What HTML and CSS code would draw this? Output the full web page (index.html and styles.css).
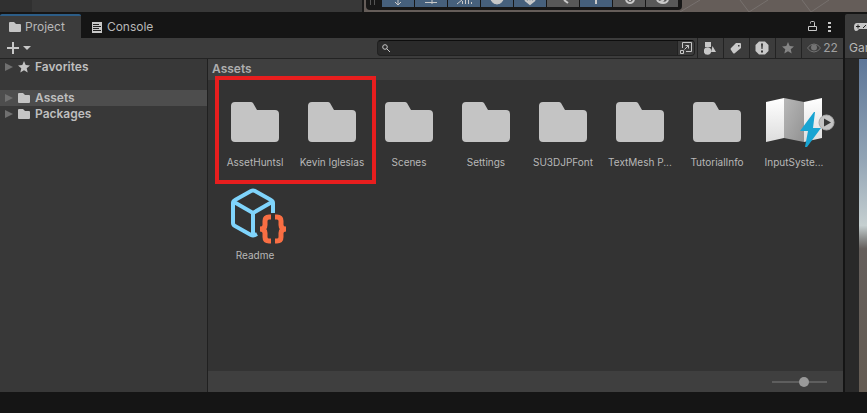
FILE: index.html
```html
<!DOCTYPE html>
<html lang="en">
<head>
<meta charset="utf-8">
<title>Project</title>
<link rel="stylesheet" href="styles.css">
</head>
<body>
<svg class="defs" aria-hidden="true">
  <symbol id="folder" viewBox="0 0 64 64"><path d="M12 12h16q1 0 2 1l4 7h18q4 0 4 4v24q0 4-4 4H12q-4 0-4-4V16q0-4 4-4z"/></symbol>
  <symbol id="folder-small" viewBox="0 0 12 10"><path d="M1 0h4l2 2h4q1 0 1 1v6q0 1-1 1H1q-1 0-1-1V1q0-1 1-1z"/></symbol>
  <symbol id="star" viewBox="0 0 12 12"><path d="M6 0l1.700 4 4.300.4-3.300 2.800 1 4.300L6 9.200l-3.700 2.300 1-4.300L0 4.400 4.300 4z"/></symbol>
  <symbol id="arrow" viewBox="0 0 8 8"><path d="M0 0l8 4-8 4z"/></symbol>
</svg>

<div class="scene">
  <div class="scene-side"></div>
  <div class="scene-main"></div>
  <div class="scene-view">
    <svg class="scene-lines" viewBox="0 0 503 12" preserveAspectRatio="none"><path d="M316 12l20-12M376 0l9 12 19-12M438 0l9 12 18-12"/></svg>
    <div class="tools">
      <span class="grip"></span>
      <button class="tool on" aria-label="Pivot"><svg viewBox="0 0 32 7"><path d="M16 0v4M13 2l3 3 3-3"/></svg></button>
      <button class="tool on" aria-label="Rotation"><svg viewBox="0 0 32 7"><path d="M10 2.500h12M17 0v4"/></svg></button>
      <button class="tool on" aria-label="Grid"><svg viewBox="0 0 32 7"><path d="M9 4l5-4M14.500 1v3M17.500 0v4M20.500 0v4M23.500 2v2"/></svg></button>
      <button class="tool on" aria-label="Shading"><svg viewBox="0 0 32 7"><path class="solid" d="M10 0h12q-2 4-6 4t-6-4z"/></svg></button>
      <button class="tool on" aria-label="Gizmo"><svg viewBox="0 0 32 7"><path class="thick" d="M11 0l5 4 5-4M14 0l2 2 2-2"/></svg></button>
      <button class="tool" aria-label="Picking"><svg viewBox="0 0 32 7"><path class="thick" d="M17 0l4 3"/></svg></button>
      <button class="tool on" aria-label="Light"><svg viewBox="0 0 32 7"><path class="thick" d="M16 0v4"/></svg></button>
      <button class="tool" aria-label="Audio"><svg viewBox="0 0 32 7"><path class="thick" d="M13 0q1 3 4 3t4-3M17 0v1"/></svg></button>
      <button class="tool" aria-label="Effects"><svg viewBox="0 0 32 7"><path class="thick" d="M11 0q2 3 6 3t5-3M14 2l4-2"/></svg></button>
    </div>
  </div>
</div>

<div class="workspace">
  <main class="project">
    <div class="tabs">
      <button class="tab active"><svg class="tab-icon" viewBox="0 0 12 10"><use href="#folder-small"/></svg>Project</button>
      <button class="tab"><svg class="tab-icon console" viewBox="0 0 10 11"><path class="fill" d="M0 0h10v11H0z"/><path class="ink" d="M1 2.500h6M1 4.500h8M1 6.500h6M1 8.500h8"/></svg>Console</button>
      <div class="tab-actions">
        <button class="bare" aria-label="Lock"><svg width="9" height="11" viewBox="0 0 9 11"><path class="line" d="M.5 5.500h8v4h-8zM2.500 2.500V1.500q0-1 1-1h2q1 0 1 1v4"/></svg></button>
        <button class="bare" aria-label="Menu"><svg width="3" height="11" viewBox="0 0 3 11"><path class="fill" d="M0 1h3v2H0zM0 5h3v2H0zM0 9h3v2H0z"/></svg></button>
      </div>
    </div>

    <div class="toolbar">
      <button class="add" aria-label="Create"><svg width="24" height="12" viewBox="0 0 24 12"><path class="fill" d="M5 0h2v5h5v2H7v5H5V7H0V5h5zM16 4h8l-4 4z"/></svg></button>
      <div class="search">
        <svg width="8" height="8" viewBox="0 0 8 8"><circle class="line" cx="3" cy="3" r="2.300"/><path class="line" d="M4.700 4.700L8 8"/></svg>
        <input type="text" aria-label="Search assets">
        <button class="open" aria-label="Open in search"><svg width="12" height="12" viewBox="0 0 12 12"><path class="line" d="M2.500 6V.5h9v9H6M.5 8.500h3v3h-3zM4.500 7.500l4-4M5.500 3.500h3v3"/></svg></button>
      </div>
      <button class="filter" aria-label="Filter by type"><svg width="12" height="13" viewBox="0 0 12 13"><path class="fill" d="M1 0h6v5H1zM8.500 4l3.500 6H7z"/><circle class="fill" cx="3.500" cy="9" r="3.700"/></svg></button>
      <button class="filter" aria-label="Filter by label"><svg width="12" height="12" viewBox="0 0 12 12"><path class="fill" fill-rule="evenodd" d="M6 1h4q1 0 1 1v4l-6 5q-1 1-2 0L1 8q-1-1 0-2zM8 3v1.500h1.500V3z"/></svg></button>
      <button class="filter" aria-label="Filter by warning"><svg width="14" height="14" viewBox="0 0 14 14"><path class="fill" d="M4 .5h6L13.500 4v6L10 13.500H4L.5 10V4z"/><path class="mark" d="M6 2.500h2L7.500 8h-1zM6 9.500h2v2H6z"/></svg></button>
      <button class="filter dim" aria-label="Favorite search"><svg width="12" height="12" viewBox="0 0 12 12"><use href="#star"/></svg></button>
      <button class="filter hidden-count"><svg width="14" height="10" viewBox="0 0 14 10"><path class="eye" d="M.5 5Q3 1 7 1t6.500 4Q11 9 7 9T.5 5z"/><circle class="pupil" cx="7" cy="4.500" r="3"/></svg>22</button>
    </div>

    <div class="browser">
      <nav class="tree">
        <a class="node first" href="#"><svg class="arrow" viewBox="0 0 8 8"><use href="#arrow"/></svg><svg class="kind star" viewBox="0 0 12 12"><use href="#star"/></svg>Favorites</a>
        <a class="node selected" href="#"><svg class="arrow" viewBox="0 0 8 8"><use href="#arrow"/></svg><svg class="kind" viewBox="0 0 12 10"><use href="#folder-small"/></svg>Assets</a>
        <a class="node" href="#"><svg class="arrow" viewBox="0 0 8 8"><use href="#arrow"/></svg><svg class="kind" viewBox="0 0 12 10"><use href="#folder-small"/></svg>Packages</a>
      </nav>
      <section class="content">
        <h1 class="path">Assets</h1>
        <div class="assets">
          <div class="asset"><svg viewBox="0 0 64 64"><use href="#folder"/></svg><span>AssetHuntsl</span></div>
          <div class="asset"><svg viewBox="0 0 64 64"><use href="#folder"/></svg><span>Kevin Iglesias</span></div>
          <div class="asset"><svg viewBox="0 0 64 64"><use href="#folder"/></svg><span>Scenes</span></div>
          <div class="asset"><svg viewBox="0 0 64 64"><use href="#folder"/></svg><span>Settings</span></div>
          <div class="asset"><svg viewBox="0 0 64 64"><use href="#folder"/></svg><span>SU3DJPFont</span></div>
          <div class="asset"><svg viewBox="0 0 64 64"><use href="#folder"/></svg><span>TextMesh P...</span></div>
          <div class="asset"><svg viewBox="0 0 64 64"><use href="#folder"/></svg><span>TutorialInfo</span></div>
          <div class="asset">
            <svg viewBox="0 0 64 64">
              <defs>
                <linearGradient id="paper" x2="0" y2="1"><stop stop-color="#fff"/><stop offset="1" stop-color="#ddd"/></linearGradient>
                <linearGradient id="fold" x2="1" y2="1"><stop stop-color="#b8b8b8"/><stop offset="1" stop-color="#929292"/></linearGradient>
              </defs>
              <path fill="url(#paper)" d="M4 12l18-4v40L4 52zM42 12l18-4v40l-18 4z"/>
              <path fill="url(#fold)" d="M22 8l20 4v40l-20-4z"/>
              <path fill="#18a4d2" d="M52 22L38 41h8l-3 16h2l14-19h-8l2-16z"/>
              <circle class="play" cx="64.500" cy="32.500" r="7.500"/>
              <path fill="#383838" d="M62 28.500l7 4-7 4z"/>
            </svg>
            <span>InputSyste...</span>
          </div>
          <div class="asset">
            <svg viewBox="0 0 64 64">
              <path class="cube" d="M50 30V20q0-2-2-3L32 8q-2-1-4 0L12 17q-2 1-2 3v20q0 2 2 3l16 9q2 1 4 0l2-1M11 19l19 11 19-11M30 30v23"/>
              <path class="brace" d="M48 34h-2q-4 0-4 4v4q0 4-5 4q5 0 5 4v4q0 4 4 4h2M52 34h2q4 0 4 4v4q0 4 5 4q-5 0-5 4v4q0 4-4 4h-2"/>
            </svg>
            <span>Readme</span>
          </div>
          <div class="highlight"></div>
        </div>
        <div class="status"><input type="range" min="0" max="100" value="60" aria-label="Icon size"></div>
      </section>
    </div>
  </main>

  <aside class="game">
    <button class="game-tab" aria-label="Game"><svg width="18" height="8" viewBox="0 0 18 8"><path class="fill" d="M3 0h12q3 0 3 4t-2 4q-2 0-3-2H5q-1 2-3 2-2 0-2-4t3-4z"/><path class="ink" d="M2 3.500h4M4 1.500v4M9 5l3-3"/></svg></button>
    <div class="game-bar">Game</div>
    <div class="game-view"></div>
  </aside>
</div>
<footer class="bottom"></footer>
</body>
</html>
```
FILE: styles.css
```css
* { box-sizing: border-box; }

body {
  margin: 0;
  min-height: 100vh;
  display: flex;
  flex-direction: column;
  overflow: hidden;
  background: #151515;
  color: #b8b8b8;
  font: 12px/16px Inter, "Liberation Sans", sans-serif;
}

button, input { font: inherit; color: inherit; margin: 0; }
button { border: 0; padding: 0; background: none; display: flex; align-items: center; justify-content: center; }
svg { display: block; flex: none; fill: #c4c4c4; }
.defs { position: absolute; width: 0; height: 0; }
.fill { fill: #c8c8c8; }
.line { fill: none; stroke: #c8c8c8; }
.ink { fill: #222; stroke: #222; stroke-width: 1; }
.mark { fill: #333; }

/* Scene strip */
.scene { display: flex; height: 12px; overflow: hidden; }
.scene-side { width: 32px; background: #303030; }
.scene-main { flex: 1; background: #383838; border-right: 2px solid #191919; }
.scene-view { flex: 0 0 503px; position: relative; background: #655d59; }
.scene-lines { width: 100%; height: 12px; fill: none; stroke: #77716e; }
.tools {
  position: absolute;
  top: 0;
  left: 2px;
  display: flex;
  gap: 1px;
  height: 10px;
  padding: 0 4px 3px 0;
  background: #171717;
  border-radius: 0 0 4px 4px;
}
.grip { width: 5px; height: 5px; margin: 0 6px 0 4px; border: solid #555; border-width: 0 1px; }
.tool { width: 32px; height: 7px; background: #585858; }
.tool.on { background: #46607c; }
.tool svg { width: 32px; height: 7px; fill: none; stroke: #c8c8c8; stroke-width: 1; }
.tool .solid { fill: #c8c8c8; }
.tool .thick { stroke-width: 2; }

/* Project window */
.workspace { flex: 1; display: flex; gap: 2px; }
.project { flex: 1; min-width: 0; display: flex; flex-direction: column; }
.tabs { display: flex; height: 26px; padding-top: 2px; }
.tab { gap: 5px; padding: 0 11px; }
.tab.active { gap: 4px; padding: 0 16px 0 9px; background: #3c3c3c; border-top: 2px solid #2c5d87; border-radius: 2px 2px 0 0; }
.tab:not(.active) { padding-top: 2px; }
.tab-icon { width: 12px; height: 10px; }
.tab-icon.console { width: 10px; height: 11px; }
.tab-actions { display: flex; gap: 11px; margin-left: auto; padding-right: 12px; }

.toolbar { display: flex; height: 21px; background: #3c3c3c; border-bottom: 1px solid #232323; }
.add { margin-left: 7px; }
.search {
  display: flex;
  align-items: center;
  flex: 0 1 318px;
  height: 16px;
  margin: 2px 2px 2px auto;
  padding-left: 4px;
  background: #2a2a2a;
  border: 1px solid #212121;
  border-top-color: #0d0d0d;
  border-radius: 4px;
}
.search input { flex: 1; min-width: 0; height: 14px; border: 0; padding: 0 4px; background: none; outline: 0; }
.open { width: 17px; height: 14px; background: #3c3c3c; border-left: 1px solid #212121; border-radius: 0 3px 3px 0; }
.filter { width: 26px; padding-right: 2px; border-left: 1px solid #232323; }
.filter.dim svg { fill: #858585; }
.hidden-count { width: 42px; gap: 2px; padding: 0; color: #a0a0a0; }
.eye { fill: none; stroke: #747474; }
.pupil { fill: #747474; }

.browser { flex: 1; display: flex; }
.tree { width: 208px; background: #383838; border-right: 1px solid #202020; }
.node { display: flex; align-items: center; height: 16px; padding-left: 5px; color: #bebebe; font-weight: 600; text-decoration: none; }
.node.first { margin-bottom: 15px; }
.node.selected { background: #4d4d4d; }
.arrow { width: 8px; height: 8px; margin-right: 5px; fill: #707070; }
.kind { width: 12px; height: 10px; margin-right: 5px; }
.kind.star { height: 12px; }

.content { flex: 1; min-width: 0; display: flex; flex-direction: column; }
.path { height: 21px; margin: 0; padding: 2px 4px; background: #3f3f3f; color: #aeaeae; font-size: 12px; font-weight: 600; line-height: 16px; }
.assets {
  flex: 1;
  position: relative;
  display: grid;
  grid-template-columns: repeat(auto-fill, 76px);
  grid-auto-rows: 93px;
  column-gap: 1px;
  align-content: start;
  padding: 10px 9px;
  background: #333;
}
.asset { display: flex; flex-direction: column; align-items: center; color: #b8b8b8; font-size: 10px; white-space: nowrap; }
.asset svg { width: 64px; height: 64px; overflow: visible; }
.asset span { line-height: 16px; }
.play { fill: #c4c4c4; stroke: #aaa; stroke-width: 1; }
.cube { fill: none; stroke: #7fd4fc; stroke-width: 4; }
.brace { fill: none; stroke: #f96e43; stroke-width: 5; }
.highlight { position: absolute; top: -4px; left: 7px; width: 161px; height: 108px; border: 4px solid #e81e1e; }

.status { display: flex; justify-content: flex-end; align-items: center; height: 21px; padding-right: 16px; background: #3f3f3f; }
.status input { appearance: none; width: 55px; height: 10px; background: linear-gradient(#5e5e5e, #5e5e5e) center / 100% 2px no-repeat; }
.status input::-webkit-slider-thumb { appearance: none; width: 10px; height: 10px; border-radius: 50%; background: #999; }

/* Game window */
.game { width: 22px; overflow: hidden; display: flex; flex-direction: column; padding-top: 2px; }
.game-tab { flex: none; height: 24px; justify-content: flex-start; padding: 2px 0 0 9px; background: #3c3c3c; border-radius: 2px 0 0 0; }
.game-bar { height: 21px; padding: 2px 4px; background: #3c3c3c; border-bottom: 1px solid #232323; }
.game-view {
  flex: 1;
  border-left: 14px solid #292929;
  background: linear-gradient(#5d7698, #92a4b5 30%, #c5cfd0 50%, #8a8c8b 54%, #655f5c 57%, #655c53);
}
.bottom { height: 21px; background: #151515; }
```
